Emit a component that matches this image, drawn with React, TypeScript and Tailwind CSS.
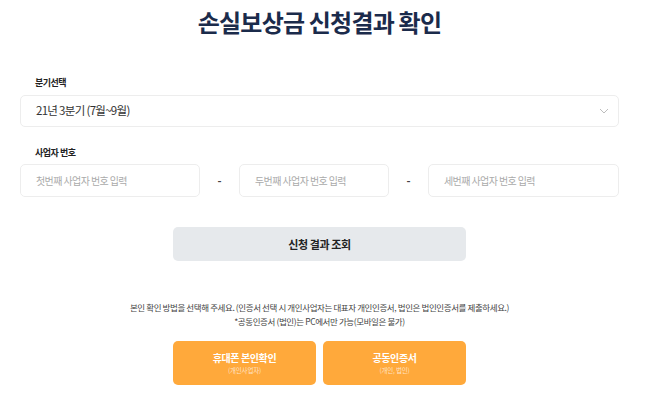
export default function App() {
  return (
    <div className="min-h-screen bg-white font-['Noto_Sans_CJK_KR','Noto_Sans',sans-serif]">
      <div className="ml-[20px] w-[599px]">
        {/* Title */}
        <h1 className="pt-[5px] text-center text-[24px] leading-[33px] font-bold tracking-[-0.8px] text-[#1b2b4b]">
          손실보상금 신청결과 확인
        </h1>

        {/* Quarter select */}
        <p className="mt-[39px] pl-[15px] text-[9px] leading-[12px] font-bold tracking-[-0.5px] text-[#222]">
          분기선택
        </p>
        <div className="mt-[6px] flex h-[32px] items-center justify-between rounded-[5px] border border-[#ededed] pl-[15px] pr-[9px]">
          <span className="text-[11.5px] tracking-[-0.7px] text-[#333]">21년 3분기 (7월~9월)</span>
          <svg width="10" height="6" viewBox="0 0 10 6" fill="none">
            <path d="M1 1l4 4 4-4" stroke="#b5b5b5" strokeWidth="0.9" />
          </svg>
        </div>

        {/* Business number */}
        <p className="mt-[20px] pl-[15px] text-[9px] leading-[12px] font-bold tracking-[-0.5px] text-[#222]">
          사업자 번호
        </p>
        <div className="mt-[5px] flex h-[33px] items-stretch">
          <NumberInput width="w-[180px]" placeholder="첫번째 사업자 번호 입력" />
          <Dash />
          <NumberInput width="w-[150px]" placeholder="두번째 사업자 번호 입력" />
          <Dash />
          <NumberInput width="flex-1" placeholder="세번째 사업자 번호 입력" />
        </div>

        {/* Lookup button */}
        <div className="mt-[30px] flex justify-center">
          <button className="h-[34px] w-[293px] rounded-[5px] bg-[#e6e9ec] text-[11px] font-bold tracking-[-0.4px] text-[#222]">
            신청 결과 조회
          </button>
        </div>

        {/* Notice */}
        <div className="mt-[39px] text-center text-[8.5px] leading-[14px] tracking-[-0.4px] text-[#444]">
          <p>본인 확인 방법을 선택해 주세요. (인증서 선택 시 개인사업자는 대표자 개인인증서, 법인은 법인인증서를 제출하세요.)</p>
          <p>*공동인증서 (법인)는 PC에서만 가능(모바일은 불가)</p>
        </div>

        {/* Auth buttons */}
        <div className="mt-[13px] flex justify-center gap-[7px]">
          <AuthButton title="휴대폰 본인확인" sub="(개인사업자)" />
          <AuthButton title="공동인증서" sub="(개인, 법인)" />
        </div>
      </div>
    </div>
  );
}

function NumberInput({ width, placeholder }: { width: string; placeholder: string }) {
  return (
    <input
      type="text"
      placeholder={placeholder}
      className={`${width} min-w-0 rounded-[5px] border border-[#ededed] px-[15px] text-[10px] tracking-[-0.6px] text-[#333] placeholder-[#aaa] outline-none`}
    />
  );
}

function Dash() {
  return (
    <span className="flex w-[39px] items-center justify-center text-[11px] font-bold text-[#444]">-</span>
  );
}

function AuthButton({ title, sub }: { title: string; sub: string }) {
  return (
    <button className="flex h-[44px] w-[143px] flex-col items-center justify-center rounded-[5px] bg-[#ffa93b] text-white">
      <span className="text-[10px] leading-[14px] font-bold tracking-[-0.4px]">{title}</span>
      <span className="text-[6.5px] leading-[10px] tracking-[-0.2px] text-white/70">{sub}</span>
    </button>
  );
}
